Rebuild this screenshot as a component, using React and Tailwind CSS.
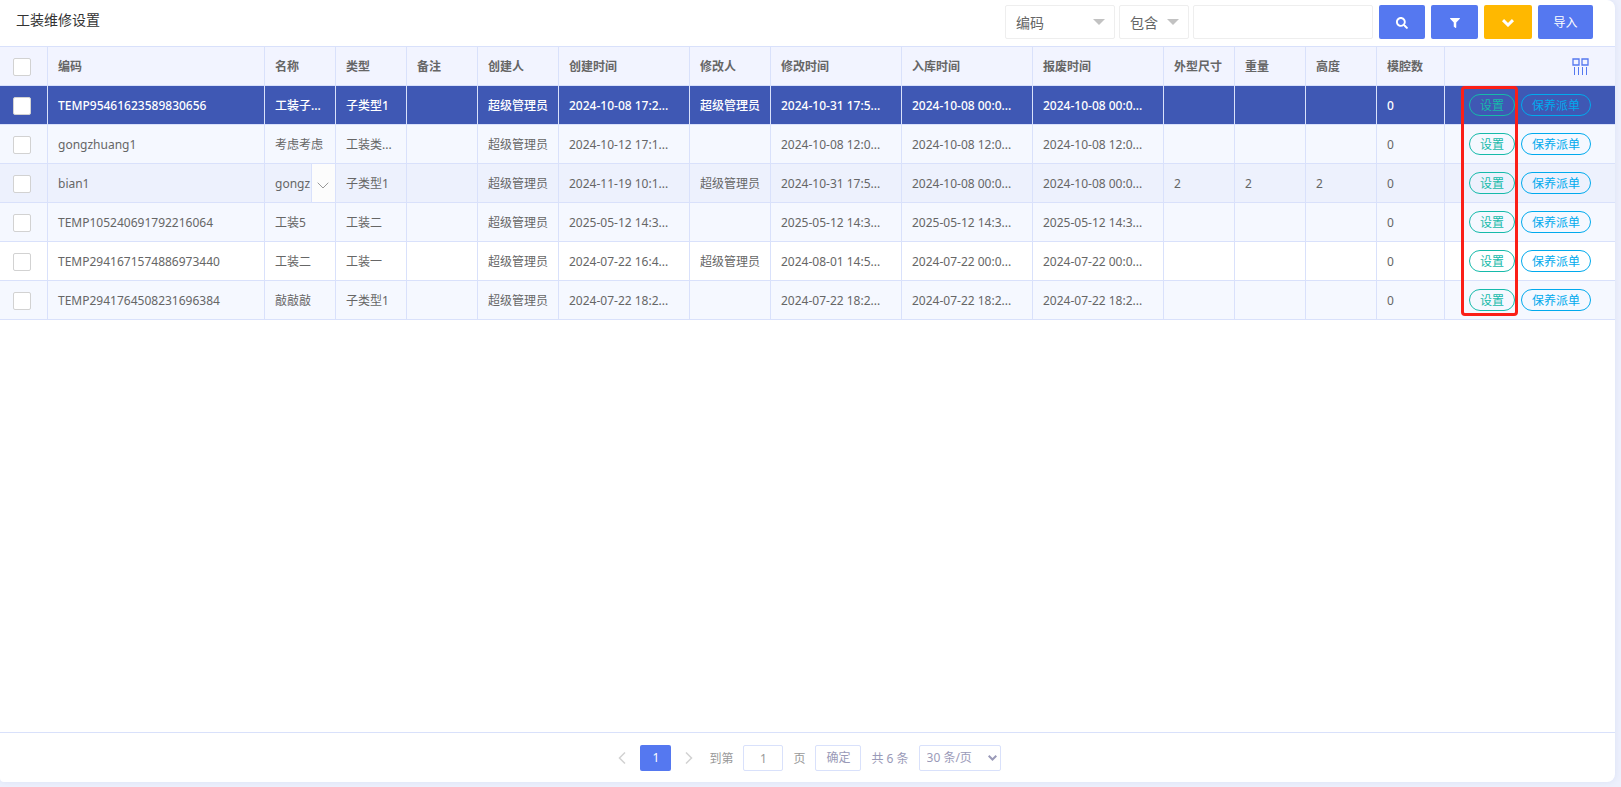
import React from "react";
import { FaSearch, FaFilter } from "react-icons/fa";

const columns = [
  ["编码", "w-[217px]"],
  ["名称", "w-[71px]"],
  ["类型", "w-[71px]"],
  ["备注", "w-[71px]"],
  ["创建人", "w-[81px]"],
  ["创建时间", "w-[131px]"],
  ["修改人", "w-[81px]"],
  ["修改时间", "w-[131px]"],
  ["入库时间", "w-[131px]"],
  ["报废时间", "w-[131px]"],
  ["外型尺寸", "w-[71px]"],
  ["重量", "w-[71px]"],
  ["高度", "w-[71px]"],
  ["模腔数", "w-[68px]"],
];

const admin = "超级管理员";
const rows = [
  ["TEMP95461623589830656", "工装子...", "子类型1", "", admin, "2024-10-08 17:2...", admin, "2024-10-31 17:5...", "2024-10-08 00:0...", "2024-10-08 00:0...", "", "", "", "0"],
  ["gongzhuang1", "考虑考虑", "工装类...", "", admin, "2024-10-12 17:1...", "", "2024-10-08 12:0...", "2024-10-08 12:0...", "2024-10-08 12:0...", "", "", "", "0"],
  ["bian1", "gongz", "子类型1", "", admin, "2024-11-19 10:1...", admin, "2024-10-31 17:5...", "2024-10-08 00:0...", "2024-10-08 00:0...", "2", "2", "2", "0"],
  ["TEMP105240691792216064", "工装5", "工装二", "", admin, "2025-05-12 14:3...", "", "2025-05-12 14:3...", "2025-05-12 14:3...", "2025-05-12 14:3...", "", "", "", "0"],
  ["TEMP2941671574886973440", "工装二", "工装一", "", admin, "2024-07-22 16:4...", admin, "2024-08-01 14:5...", "2024-07-22 00:0...", "2024-07-22 00:0...", "", "", "", "0"],
  ["TEMP2941764508231696384", "敲敲敲", "子类型1", "", admin, "2024-07-22 18:2...", "", "2024-07-22 18:2...", "2024-07-22 18:2...", "2024-07-22 18:2...", "", "", "", "0"],
];

const rowStyles = [
  "bg-[#3f58b4] text-white font-medium",
  "bg-[#f5f8ff]",
  "bg-[#edf1fd]",
  "bg-[#f5f8ff]",
  "bg-white",
  "bg-[#f5f8ff]",
];

function Check({ label }) {
  return (
    <input
      type="checkbox"
      aria-label={label}
      className="block size-[18px] appearance-none rounded-xs border border-[#d2d2d2] bg-white checked:bg-[#5578f0]"
    />
  );
}

function FilterSelect({ label, width, options }) {
  return (
    <div className={"relative " + width}>
      <select
        aria-label={label}
        className="h-[34px] w-full appearance-none rounded-xs border border-[#eeeeee] bg-white px-2.5 pt-0.5 text-sm text-[#666]"
      >
        {options.map((o) => (
          <option key={o}>{o}</option>
        ))}
      </select>
      <svg className="pointer-events-none absolute top-3.5 right-2.5" width="12" height="6" viewBox="0 0 12 6" fill="#c2c2c2">
        <path d="M0 0h12L6 6z" />
      </svg>
    </div>
  );
}

function Toolbar() {
  const btn = "flex h-[34px] items-center justify-center rounded-xs text-xs text-white";
  return (
    <header className="flex h-[46px] shrink-0 items-start justify-between pt-[5px] pr-[22px] pl-4">
      <h1 className="text-sm leading-[30px] text-[#333]">工装维修设置</h1>
      <div className="flex gap-1.5">
        <div className="flex gap-1">
          <FilterSelect label="字段" width="w-[110px]" options={["编码", "名称", "类型"]} />
          <FilterSelect label="条件" width="w-[70px]" options={["包含", "等于"]} />
          <input aria-label="关键字" className="h-[34px] w-[180px] rounded-xs border border-[#eeeeee] px-2.5 text-sm text-[#666]" />
        </div>
        <button aria-label="搜索" className={btn + " w-[46px] bg-[#5578f0] pt-0.5"}>
          <FaSearch size={12} />
        </button>
        <button aria-label="筛选" className={btn + " w-[47px] bg-[#5578f0] pt-0.5"}>
          <FaFilter size={10} />
        </button>
        <button aria-label="更多" className={btn + " w-12 bg-[#ffb800] pt-0.5"}>
          <svg width="12" height="8" viewBox="0 0 12 8" fill="none" stroke="currentColor" strokeWidth="3">
            <path d="M1 1.2l5 4.8 5-4.8" />
          </svg>
        </button>
        <button className={btn + " w-[55px] bg-[#5578f0] pt-0.5"}>导入</button>
      </div>
    </header>
  );
}

function DataTable() {
  const cell = "border-r border-b border-[#d9e1fb] pt-0.5";
  return (
    <div className="relative">
      <table className="w-full table-fixed border-separate border-spacing-0 border-t border-[#d9e1fb] text-xs text-[#666]">
        <thead>
          <tr className="h-[39px] bg-[#f2f4ff] text-left">
            <th className={cell + " w-12 pl-[13px]"}>
              <Check label="全选" />
            </th>
            {columns.map(([name, width]) => (
              <th key={name} className={cell + " px-2.5 font-semibold whitespace-nowrap " + width}>
                {name}
              </th>
            ))}
            <th className="border-b border-[#d9e1fb] pr-[26px]">
              <button aria-label="列设置" className="ml-auto block">
                <svg width="17" height="17" viewBox="0 0 17 17" fill="none" stroke="#5578f0">
                  <path d="M1 1h6v6H1zM10 1h6v6h-6z" strokeWidth="1.300" />
                  <path d="M2.500 9v8M6.500 9v8M10.500 9v8M14.500 9v8" />
                </svg>
              </button>
            </th>
          </tr>
        </thead>
        <tbody>
          {rows.map((row, r) => (
            <tr key={row[0]} className={"h-[39px] " + rowStyles[r]}>
              <td className={cell + " pl-[13px]"}>
                <Check label={"选择 " + row[0]} />
              </td>
              {row.map((text, c) => (
                <td key={c} className={cell + " relative overflow-hidden px-2.5 whitespace-nowrap"}>
                  {text}
                  {r === 2 && c === 1 && (
                    <button
                      aria-label="展开"
                      className="absolute inset-y-0 right-0 flex w-6 items-center justify-center border-l border-[#d9e1fb] bg-[#fcfcfc] pt-1 pr-0.5"
                    >
                      <svg width="12" height="7" viewBox="0 0 12 7" fill="none" stroke="#999">
                        <path d="M.7 .7L6 6 11.300 .7" />
                      </svg>
                    </button>
                  )}
                </td>
              ))}
              <td className="border-b border-[#d9e1fb] pr-6 font-normal">
                <div className="flex justify-end gap-1.5">
                  <button className="h-[22px] rounded-full border border-[#16baaa] px-2.5 pt-px text-[#16baaa]">设置</button>
                  <button className="h-[22px] rounded-full border border-[#01aaed] px-2.5 pt-px text-[#01aaed]">保养派单</button>
                </div>
              </td>
            </tr>
          ))}
        </tbody>
      </table>
      <div className="pointer-events-none absolute top-10 right-[97px] bottom-1 w-[57px] rounded-sm border-3 border-[#fb1f17]" />
    </div>
  );
}

function Pagination() {
  const box = "h-[26px] rounded-xs border border-[#d9e1fb] bg-white pt-px";
  return (
    <nav className="flex h-[50px] shrink-0 items-center justify-center gap-2.5 border-t border-[#d9e1fb] pl-1 text-xs text-[#999]">
      <button aria-label="上一页" className="mr-1">
        <svg width="8" height="12" viewBox="0 0 8 12" fill="none" stroke="#d2d2d2" strokeWidth="1.500">
          <path d="M7 .5L1.500 6 7 11.500" />
        </svg>
      </button>
      <button className="h-[26px] w-[31px] rounded-xs bg-[#5578f0] pt-px text-white">1</button>
      <button aria-label="下一页" className="mr-1.5 ml-1">
        <svg width="8" height="12" viewBox="0 0 8 12" fill="none" stroke="#d2d2d2" strokeWidth="1.500">
          <path d="M1 .5L6.500 6 1 11.500" />
        </svg>
      </button>
      <label htmlFor="page" className="pt-0.5">到第</label>
      <input id="page" defaultValue="1" className={box + " w-10 text-center"} />
      <span className="pt-0.5">页</span>
      <button className={box + " w-[46px] text-[#9a9ab8]"}>确定</button>
      <span className="pt-0.5 text-[#9a9ab8]">共 6 条</span>
      <div className="relative w-[82px]">
        <select aria-label="每页条数" className={box + " w-full appearance-none pl-[7px] text-[#9a9ab8]"}>
          <option>30 条/页</option>
          <option>50 条/页</option>
        </select>
        <svg className="pointer-events-none absolute top-2.5 right-1" width="9" height="6" viewBox="0 0 9 6" fill="none" stroke="#9a9ab8" strokeWidth="2">
          <path d="M.7 .8L4.500 4.500 8.300 .8" />
        </svg>
      </div>
    </nav>
  );
}

export default function App() {
  return (
    <div className="flex h-screen flex-col bg-[#edf0fc] pr-1.5 pb-[5px] font-['Noto_Sans','Noto_Sans_CJK_SC',sans-serif]">
      <main className="flex min-h-0 flex-1 flex-col overflow-hidden rounded-r-lg rounded-bl-sm bg-white shadow-[0_0_6px_#d9e1f5]">
        <Toolbar />
        <div className="min-h-0 flex-1 overflow-hidden">
          <DataTable />
        </div>
        <Pagination />
      </main>
    </div>
  );
}
